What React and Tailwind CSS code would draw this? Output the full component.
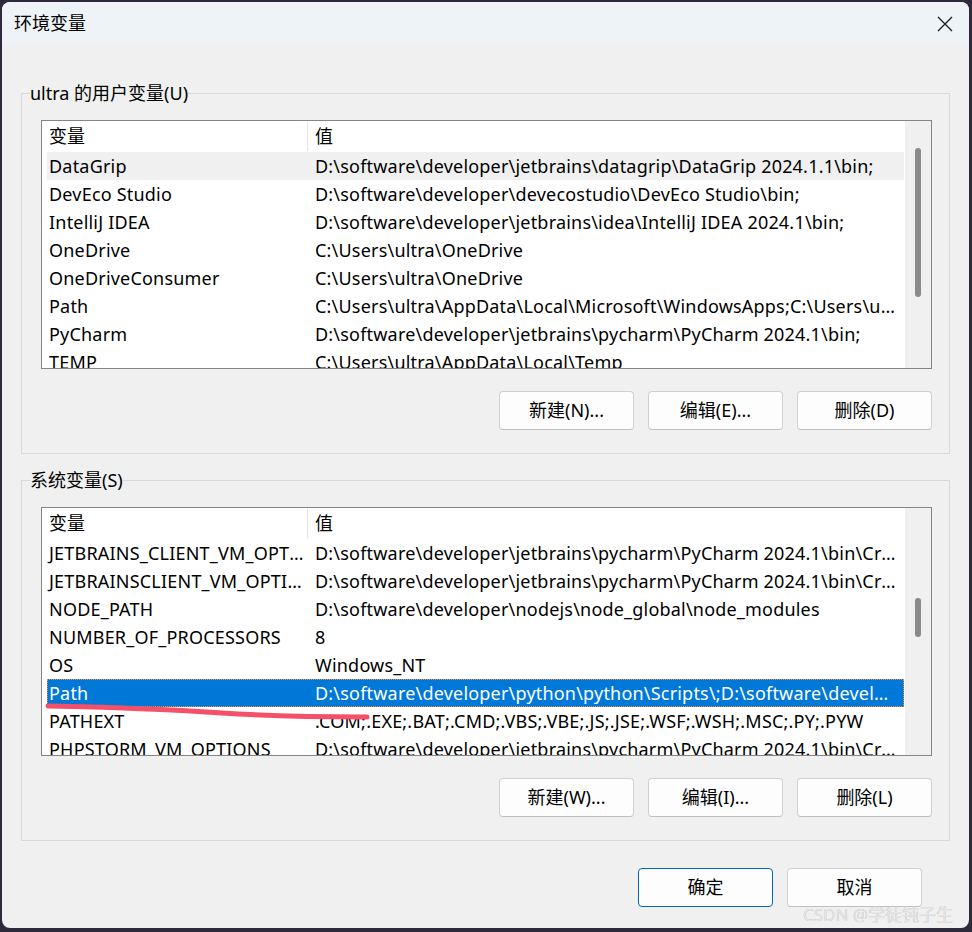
import React from "react";

const userVars = [
  ["DataGrip", "D:\\software\\developer\\jetbrains\\datagrip\\DataGrip 2024.1.1\\bin;"],
  ["DevEco Studio", "D:\\software\\developer\\devecostudio\\DevEco Studio\\bin;"],
  ["IntelliJ IDEA", "D:\\software\\developer\\jetbrains\\idea\\IntelliJ IDEA 2024.1\\bin;"],
  ["OneDrive", "C:\\Users\\ultra\\OneDrive"],
  ["OneDriveConsumer", "C:\\Users\\ultra\\OneDrive"],
  ["Path", "C:\\Users\\ultra\\AppData\\Local\\Microsoft\\WindowsApps;C:\\Users\\ultra\\AppData\\Local\\Programs"],
  ["PyCharm", "D:\\software\\developer\\jetbrains\\pycharm\\PyCharm 2024.1\\bin;"],
  ["TEMP", "C:\\Users\\ultra\\AppData\\Local\\Temp"],
];

const sysVars = [
  ["JETBRAINS_CLIENT_VM_OPTIONS", "D:\\software\\developer\\jetbrains\\pycharm\\PyCharm 2024.1\\bin\\Crack\\jetbra"],
  ["JETBRAINSCLIENT_VM_OPTIONS", "D:\\software\\developer\\jetbrains\\pycharm\\PyCharm 2024.1\\bin\\Crack\\jetbra"],
  ["NODE_PATH", "D:\\software\\developer\\nodejs\\node_global\\node_modules"],
  ["NUMBER_OF_PROCESSORS", "8"],
  ["OS", "Windows_NT"],
  ["Path", "D:\\software\\developer\\python\\python\\Scripts\\;D:\\software\\developer\\python"],
  ["PATHEXT", ".COM;.EXE;.BAT;.CMD;.VBS;.VBE;.JS;.JSE;.WSF;.WSH;.MSC;.PY;.PYW"],
  ["PHPSTORM_VM_OPTIONS", "D:\\software\\developer\\jetbrains\\pycharm\\PyCharm 2024.1\\bin\\Crack\\jetbra"],
];

function Button({ children, primary }) {
  return (
    <button
      className={
        primary
          ? "w-[135px] h-[39px] rounded-[4px] border border-[#0067c0] bg-[#fdfdfd] text-[18px] text-black"
          : "w-[135px] h-[39px] rounded-[4px] border border-[#d0d0d0] border-b-[#bfbfbf] bg-[#fdfdfd] text-[18px] text-black"
      }
    >
      {children}
    </button>
  );
}

function VarList({ rows, hoverIndex, selectedIndex, thumbTop, thumbHeight, underline }) {
  return (
    <div className="ml-[11px] h-[249px] border border-[#858585] bg-white flex overflow-hidden">
      <div className="relative flex-1 min-w-0 pl-[5px]">
        <div className="flex h-[31px] items-center">
          <div className="w-[261px] h-[29px] pl-[2px] flex items-center border-r border-[#e5e5e5]">变量</div>
          <div className="pl-[7px]">值</div>
        </div>
        {rows.map(([name, value], i) => {
          const selected = i === selectedIndex;
          const hover = i === hoverIndex;
          return (
            <div
              key={name + i}
              className={
                selected
                  ? "flex h-[28px] items-center tracking-[0.2px] bg-[#0078d7] text-white outline outline-1 outline-dotted outline-[#ff8728] -outline-offset-1"
                  : hover
                  ? "flex h-[28px] items-center tracking-[0.2px] bg-[#f0f0f0]"
                  : "flex h-[28px] items-center tracking-[0.2px]"
              }
            >
              <div className="w-[262px] shrink-0 pl-[2px] pr-[2px] truncate">{name}</div>
              <div className="flex-1 min-w-0 pl-[6px] pr-[7px] truncate">{value}</div>
            </div>
          );
        })}
        {underline && (
          <svg className="absolute left-0 top-0 pointer-events-none" width="400" height="250" viewBox="0 0 400 250">
            <path
              d="M6 198 C 60 199, 120 201, 180 205 S 290 209, 325 209"
              fill="none"
              stroke="#f4506a"
              strokeWidth="5"
              strokeLinecap="round"
            />
          </svg>
        )}
      </div>
      <div className="w-[27px] shrink-0 bg-[#f0f0f0] border-l border-white">
        <div
          className="mx-auto w-[6px] rounded-full bg-[#8a8a8a]"
          style={{ marginTop: thumbTop, height: thumbHeight }}
        />
      </div>
    </div>
  );
}

export default function App() {
  return (
    <div
      className="w-[972px] h-[932px] bg-[#2e2a3b] pt-[2px] pl-[2px] text-[18px] text-black overflow-hidden relative"
      style={{ fontFamily: '"Noto Sans", "Noto Sans CJK SC", sans-serif' }}
    >
      <div className="w-[967px] h-[926px] bg-[#f0f0f0] rounded-lg overflow-hidden flex flex-col">
        {/* title bar */}
        <div className="h-[43px] bg-[#eef3f7] flex items-center justify-between pl-[12px] pr-[16px]">
          <span>环境变量</span>
          <svg width="16" height="16" viewBox="0 0 16 16">
            <path d="M1 1 L15 15 M15 1 L1 15" stroke="#1a1a1a" strokeWidth="1.3" />
          </svg>
        </div>

        <div className="px-[19px] pt-[36px]">
          <fieldset className="min-w-0 border border-[#d9d9d9] pl-[8px] pr-[17px] pt-[15px] pb-[23px]">
            <legend className="px-0 leading-[24px]">ultra 的用户变量(U)</legend>
            <VarList rows={userVars} hoverIndex={0} thumbTop={27} thumbHeight={149} />
            <div className="mt-[22px] flex justify-end gap-[14px]">
              <Button>新建(N)...</Button>
              <Button>编辑(E)...</Button>
              <Button>删除(D)</Button>
            </div>
          </fieldset>

          <fieldset className="min-w-0 mt-[14px] border border-[#d9d9d9] pl-[8px] pr-[17px] pt-[15px] pb-[23px]">
            <legend className="px-0 leading-[24px]">系统变量(S)</legend>
            <VarList rows={sysVars} selectedIndex={5} thumbTop={90} thumbHeight={39} underline />
            <div className="mt-[22px] flex justify-end gap-[14px]">
              <Button>新建(W)...</Button>
              <Button>编辑(I)...</Button>
              <Button>删除(L)</Button>
            </div>
          </fieldset>

          <div className="mt-[27px] pr-[28px] flex justify-end gap-[14px]">
            <Button primary>确定</Button>
            <Button>取消</Button>
          </div>
        </div>
      </div>

      {/* watermark */}
      <div className="absolute left-[803px] top-[902px] text-[17px] text-[#e8e8e8] [text-shadow:0_0_0.5px_#9a9a9a] whitespace-nowrap">
        CSDN @学徒钝子生
      </div>
    </div>
  );
}
